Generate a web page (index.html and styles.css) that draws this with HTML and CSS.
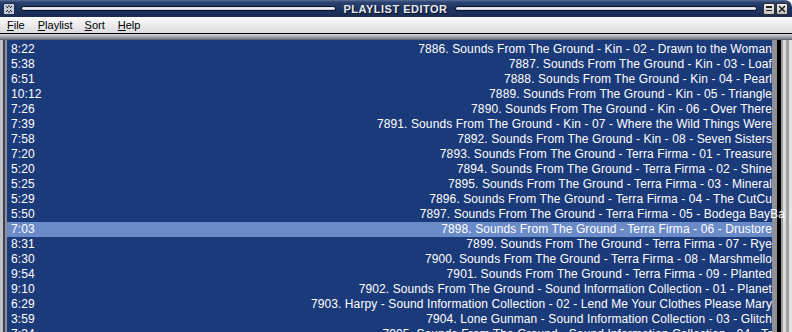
FILE: index.html
```html
<!DOCTYPE html>
<html lang="en">
<head>
    <meta charset="UTF-8">
    <title>Playlist Editor</title>
    <link rel="stylesheet" href="styles.css">
</head>
<body>
    <div class="window">
        <header class="titlebar">
            <span class="app-icon">
                <svg width="12" height="12" viewBox="0 0 12 12">
                    <rect x="0.5" y="0.5" width="11" height="11" fill="#c8ccd4" stroke="#20304c"/>
                    <path d="M3 3 L5 5 M9 3 L7 5 M3 9 L5 7 M9 9 L7 7 M6 2 V4 M6 8 V10" stroke="#101828" stroke-width="1"/>
                </svg>
            </span>
            <span class="groove groove-left"></span>
            <span class="title">PLAYLIST EDITOR</span>
            <span class="groove groove-right"></span>
            <span class="win-buttons">
                <span class="win-btn">
                    <svg width="10" height="10" viewBox="0 0 10 10"><rect x="2" y="2" width="6" height="2" fill="#202020"/><rect x="2" y="6" width="6" height="1" fill="#202020"/></svg>
                </span>
                <span class="win-btn">
                    <svg width="10" height="10" viewBox="0 0 10 10"><path d="M2 2 L8 8 M8 2 L2 8" stroke="#202020" stroke-width="1.6"/></svg>
                </span>
            </span>
        </header>

        <nav class="menubar">
            <span class="menu-item"><u>F</u>ile</span>
            <span class="menu-item menu-wide"><u>P</u>laylist</span>
            <span class="menu-item"><u>S</u>ort</span>
            <span class="menu-item"><u>H</u>elp</span>
        </nav>

        <div class="frame-top"></div>

        <main class="frame">
            <div class="edge-left"></div>
            <ul class="track-list" id="trackList"></ul>
            <div class="edge-right"></div>
        </main>
    </div>

    <script>
        const tracks = [
            ['8:22', '7886. Sounds From The Ground - Kin - 02 - Drawn to the Woman'],
            ['5:38', '7887. Sounds From The Ground - Kin - 03 - Loaf'],
            ['6:51', '7888. Sounds From The Ground - Kin - 04 - Pearl'],
            ['10:12', '7889. Sounds From The Ground - Kin - 05 - Triangle'],
            ['7:26', '7890. Sounds From The Ground - Kin - 06 - Over There'],
            ['7:39', '7891. Sounds From The Ground - Kin - 07 - Where the Wild Things Were'],
            ['7:58', '7892. Sounds From The Ground - Kin - 08 - Seven Sisters'],
            ['7:20', '7893. Sounds From The Ground - Terra Firma - 01 - Treasure'],
            ['5:20', '7894. Sounds From The Ground - Terra Firma - 02 - Shine'],
            ['5:25', '7895. Sounds From The Ground - Terra Firma - 03 - Mineral'],
            ['5:29', '7896. Sounds From The Ground - Terra Firma - 04 - The CutCu'],
            ['5:50', '7897. Sounds From The Ground - Terra Firma - 05 - Bodega BayBa', 'spill'],
            ['7:03', '7898. Sounds From The Ground - Terra Firma - 06 - Drustore', 'selected'],
            ['8:31', '7899. Sounds From The Ground - Terra Firma - 07 - Rye'],
            ['6:30', '7900. Sounds From The Ground - Terra Firma - 08 - Marshmello'],
            ['9:54', '7901. Sounds From The Ground - Terra Firma - 09 - Planted'],
            ['9:10', '7902. Sounds From The Ground - Sound Information Collection - 01 - Planet'],
            ['6:29', '7903. Harpy - Sound Information Collection - 02 - Lend Me Your Clothes Please Mary'],
            ['3:59', '7904. Lone Gunman - Sound Information Collection - 03 - Glitch'],
            ['7:34', '7905. Sounds From The Ground - Sound Information Collection - 04 - Tr']
        ];

        const list = document.getElementById('trackList');
        list.innerHTML = tracks.map(([time, name, kind]) =>
            `<li class="track ${kind || ''}"><span class="time">${time}</span><span class="name">${name}</span></li>`
        ).join('');
    </script>
</body>
</html>
```

FILE: styles.css
```css
:root {
    --list-bg: #1b3a7a;
    --list-sel: #6a8ac8;
    --menu-top: #fbfbfb;
    --menu-bottom: #dcdcdf;
    --text: #ffffff;
}

* {
    margin: 0;
    padding: 0;
    box-sizing: border-box;
}

body {
    background: #ffffff;
    font-family: "Liberation Sans", Arial, sans-serif;
}

.window {
    width: 792px;
    height: 332px;
    overflow: hidden;
    display: flex;
    flex-direction: column;
}

/* title bar */
.titlebar {
    height: 17px;
    display: flex;
    align-items: center;
    padding: 0 4px 0 3px;
    gap: 6px;
    background: linear-gradient(#5d7198 0, #2c4473 2px, #1e3460 50%, #1a2c54 100%);
    border-top-right-radius: 7px;
}

.app-icon {
    display: flex;
    width: 12px;
    height: 12px;
}

.groove {
    height: 5px;
    background: linear-gradient(#c4ccdc, #f4f6fa 40%, #b8c0d0);
    border: 1px solid #0c1428;
    border-radius: 3px;
}

.groove-left {
    flex: 313 1 0;
}

.groove-right {
    flex: 300 1 0;
}

.title {
    font-size: 11px;
    font-weight: bold;
    color: #e6eaf2;
    letter-spacing: 0.5px;
    text-shadow: 1px 1px 0 #0a1020;
    padding: 0 1px;
}

.win-buttons {
    display: flex;
    gap: 1px;
}

.win-btn {
    width: 12px;
    height: 12px;
    display: flex;
    align-items: center;
    justify-content: center;
    background: linear-gradient(#f2f2f2, #c4c4c4);
    border: 1px solid #303030;
    border-radius: 2px;
}

/* menu bar */
.menubar {
    height: 16px;
    display: flex;
    align-items: center;
    padding-left: 7px;
    background: linear-gradient(var(--menu-top), var(--menu-bottom));
    font-size: 11px;
    color: #000000;
}

.menu-item {
    margin-right: 13px;
}

.menu-item.menu-wide {
    margin-right: 12px;
}

.menu-item u {
    text-decoration-thickness: 1px;
}

.frame-top {
    height: 7px;
    border-top: 1px solid #000000;
    background: linear-gradient(#d8d8dc, #9ea2ac 50%, #5a5e68);
}

/* list area */
.frame {
    flex: 1;
    display: flex;
    min-height: 0;
}

.edge-left {
    width: 7px;
    background: linear-gradient(to right, #c0c0c8 0, #c0c0c8 3px, #3c4048 3px, #3c4048 5px, #8c9098 5px);
}

.edge-right {
    width: 20px;
    background: linear-gradient(to right,
        #8c9098 0, #8c9098 5px,
        #000000 5px, #000000 9px,
        #9a9a9a 9px, #9a9a9a 11px,
        #dcdcdc 11px, #dcdcdc 14px,
        #a0a0a4 14px, #a0a0a4 17px,
        #e4e4e4 17px);
}

.track-list {
    flex: 1;
    list-style: none;
    background: var(--list-bg);
    padding-top: 2px;
    position: relative;
    z-index: 1;
}

.track {
    height: 15px;
    line-height: 15px;
    display: flex;
    justify-content: space-between;
    padding-left: 4px;
    font-size: 12px;
    letter-spacing: 0.1px;
    color: var(--text);
    white-space: nowrap;
}

.track.selected {
    background: var(--list-sel);
}

.track.spill .name {
    margin-right: -13px;
}
```
